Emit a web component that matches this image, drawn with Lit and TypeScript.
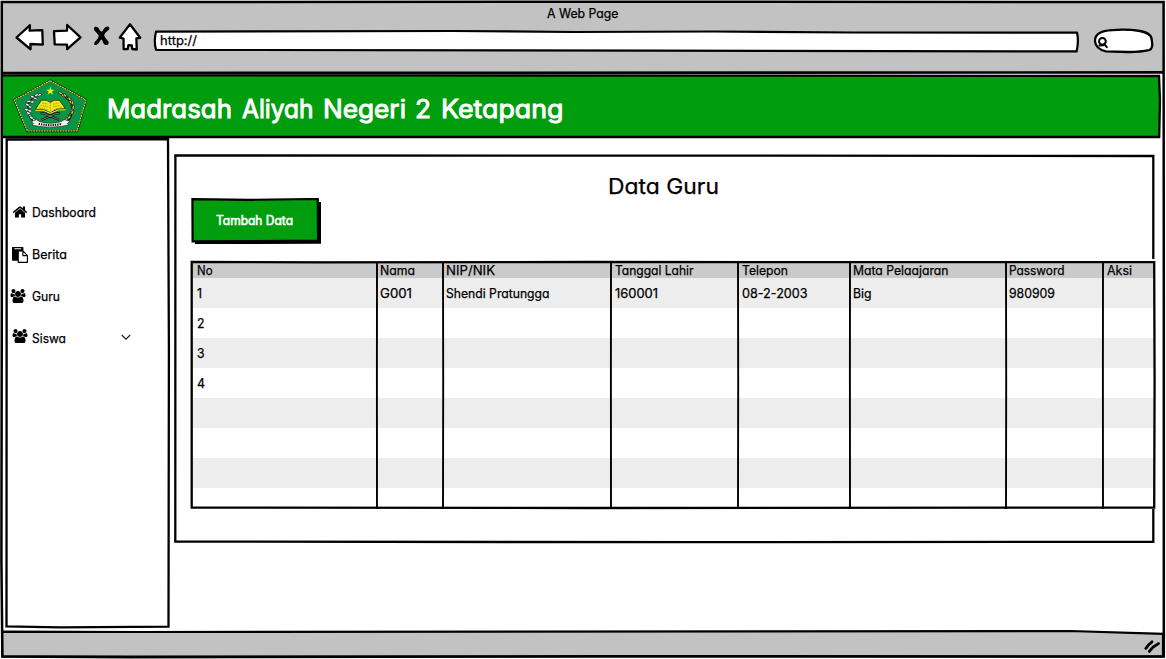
import { LitElement, html, svg, css } from "lit";
import { customElement, property } from "lit/decorators.js";

/* A run of text fitted to a given width, baseline 12px (or `base`) below its top. */
@customElement("sketch-text")
class SketchText extends LitElement {
  @property() text = "";
  @property({ type: Number }) width = 0;
  @property({ type: Number }) size = 12.5;
  @property({ type: Number }) base = 12;
  static styles = css`
    :host { display: block; flex: none; line-height: 0; }
    svg { display: block; overflow: visible; }
    text {
      font-family: Inter, "Open Sans", sans-serif;
      font-feature-settings: "cv11" 1;
      fill: currentColor;
      stroke: currentColor;
      stroke-width: var(--ink, 0.25px);
      white-space: pre;
    }
  `;
  render() {
    return html`<svg width=${this.width} height=${this.base + 4}>
      <text x="0" y=${this.base} font-size=${this.size} textLength=${this.width} lengthAdjust="spacingAndGlyphs">${this.text}</text>
    </svg>`;
  }
}

const label = (text: string, width: number, size = 12.5, base = 12) =>
  html`<sketch-text .text=${text} .width=${width} .size=${size} .base=${base}></sketch-text>`;

const HOME =
  "M1472 992v480q0 26-19 45t-45 19h-384v-384h-256v384h-384q-26 0-45-19t-19-45v-480q0-1 .5-3t.5-3l575-474 575 474q1 2 1 6zm223-69l-62 74q-8 9-21 11h-3q-13 0-21-7l-692-577-692 577q-12 8-24 7-13-2-21-11l-62-74q-8-10-7-23.5t11-21.5l719-599q32-26 76-26t76 26l244 204v-195q0-14 9-23t23-9h192q14 0 23 9t9 23v408l219 182q10 8 11 21.5t-7 23.5z";
const PASTE =
  "M768 1664h896v-640h-416q-40 0-68-28t-28-68v-416h-384v1152zm256-1440v-64q0-13-9.5-22.5t-22.5-9.5h-704q-13 0-22.5 9.5t-9.5 22.5v64q0 13 9.5 22.5t22.5 9.5h704q13 0 22.5-9.5t9.5-22.5zm256 672h299l-299-299v299zm512 128v672q0 40-28 68t-68 28h-960q-40 0-68-28t-28-68v-160h-544q-40 0-68-28t-28-68v-1344q0-40 28-68t68-28h1088q40 0 68 28t28 68v328q21 13 36 28l408 408q28 28 48 76t20 88z";
const USERS =
  "M529 896q-162 5-265 128h-134q-82 0-138-40.5t-56-118.5q0-353 124-353 6 0 43.5 21t97.5 42.5 119 21.5q67 0 133-23-5 37-5 66 0 139 81 256zm1071 637q0 120-73 189.5t-194 69.5h-874q-121 0-194-69.5t-73-189.5q0-53 3.5-103.5t14-109 26.5-108.5 43-97.5 62-81 85.5-53.5 111.5-20q10 0 43 21.5t73 48 107 48 135 21.5 135-21.5 107-48 73-48 43-21.5q61 0 111.5 20t85.5 53.5 62 81 43 97.5 26.5 108.5 14 109 3.5 103.5zm-1024-1277q0 106-75 181t-181 75-181-75-75-181 75-181 181-75 181 75 75 181zm704 384q0 159-112.5 271.5t-271.5 112.5-271.5-112.5-112.5-271.5 112.5-271.5 271.5-112.5 271.5 112.5 112.5 271.5zm576 225q0 78-56 118.5t-138 40.5h-134q-103-123-265-128 81-117 81-256 0-29-5-66 66 23 133 23 59 0 119-21.5t97.5-42.5 43.5-21q124 0 124 353zm-128-609q0 106-75 181t-181 75-181-75-75-181 75-181 181-75 181 75 75 181z";

@customElement("browser-bar")
class BrowserBar extends LitElement {
  static styles = css`
    :host { display: block; height: 73px; background: #c2c2c2; }
    .title { display: flex; padding: 6px 0 0 547px; height: 17px; }
    .tools { display: flex; align-items: flex-start; height: 34px; }
    svg { display: block; overflow: visible; flex: none; }
    .ink { fill: #fff; stroke: #000; stroke-width: 2.3; stroke-linejoin: round; stroke-linecap: round; }
    .url { position: relative; width: 926px; height: 24px; margin-top: 6px; }
    .shape { position: absolute; left: 0; top: 0; }
    .addr { position: relative; padding: 4px 0 0 7px; }
    .search { margin: 5px 0 0 13px; }
  `;
  render() {
    return html`
      <div class="title">${label("A Web Page", 71.5)}</div>
      <div class="tools">
        <svg width="153" height="34" viewBox="0 23 153 34">
          <path class="ink" d="M16.5 37.5L30 25.2L29.6 30.6L42.3 30.2L42.8 44.6L30.4 44L30.6 49.3Z" />
          <path class="ink" d="M54 31.2L67 30.6L67.2 25L80.5 37.3L67.2 49.2L67 44.6L54.7 44.4Z" />
          <path fill="#000" d="M95 26.8Q98 26.2 99.8 30.2Q101.6 33 103 29.9Q105.5 25.9 108.6 26.7Q110.4 28 108.3 30.2Q104.2 33.1 104.2 35.6Q105 38.6 108.4 41.4Q109.4 43.8 107 45Q103.7 45.7 102.6 41Q101.4 38 100 41Q97.7 45.6 94.6 45Q93.3 43.3 95.7 41Q98.9 38.4 98.7 35.6Q97.4 33.2 94.6 30.7Q93.1 28.2 95 26.8Z" />
          <path class="ink" d="M130 24.3L140.2 37.8L136.4 38.4L136.7 49.5L132.2 49L131.8 45.3L128.4 45.1L127.7 49L123.7 49.2L123.5 38.5L119.7 37.6Z" />
        </svg>
        <div class="url">
          <svg class="shape" width="926" height="24">
            <path d="M3 2.7L300 2L420 3L560 2.5L700 3.5L924 3.6Q926 12 923.6 22.4L500 21.7L3 20.8Q0.6 12 3 2.7Z" fill="#fff" stroke="#000" stroke-width="2.2" stroke-linejoin="round" />
          </svg>
          <div class="addr">${label("http://", 37)}</div>
        </div>
        <svg class="search" width="62" height="26" viewBox="1092 28 62 26">
          <path class="ink" d="M1095 41C1094.6 34 1101 30.7 1112 30.1Q1128 29 1140 31Q1151 33 1151.6 39Q1153.8 49 1149 50.2Q1140 52.2 1127 52L1106 51.3Q1095.5 49 1095 41Z" />
          <circle cx="1102.4" cy="41.3" r="3.4" fill="#fff" stroke="#000" stroke-width="2" />
          <path d="M1099.4 45.6L1103.5 45.2M1104.3 44.2L1106.8 47.2" fill="none" stroke="#000" stroke-width="2" stroke-linecap="round" />
        </svg>
      </div>`;
  }
}

/* Pentagon crest: wreaths of cotton and rice around an open book on a stand. */
const leaves = (pts: number[][], a: string, b: string) =>
  pts.map(
    ([x, y, r], i) => svg`<g transform="translate(${x} ${y}) rotate(${r})">
      <ellipse rx="6.5" ry="3.6" cx="-5" fill=${a} stroke="#111" stroke-width="1.8" />
      <ellipse rx="6" ry="3.4" cx="5" cy="2" fill=${i % 2 ? b : a} stroke="#111" stroke-width="1.8" /></g>`
  );
const crest = html`<svg width="90" height="66" viewBox="0 0 270 198">
  <path d="M136 19L244 78L217 172H66L27 78Z" fill="#079447" stroke="#111" stroke-width="5" />
  <path d="M136 20L243 78L216 171H67L28 78Z" fill="none" stroke="#e6dc30" stroke-width="3.4" stroke-dasharray="6 2" />
  <path d="M103 60Q66 78 68 107Q70 132 92 147" fill="none" stroke="#111" stroke-width="4" />
  <path d="M168 60Q204 78 203 107Q201 132 181 147" fill="none" stroke="#111" stroke-width="5" />
  ${leaves([[99, 62, -20], [87, 70, 20], [77, 82, 0], [72, 95, 30], [70, 108, 10], [74, 121, 40], [84, 134, 30]], "#fff", "#dfe6dd")}
  ${leaves([[171, 60, 30], [184, 68, 45], [196, 79, 60], [203, 92, 85], [204, 106, 100], [199, 120, 120], [189, 134, 130]], "#d8c42e", "#6b6212")}
  <path d="M136 38L139 47H148L141 53L144 62L136 56L128 62L131 53L124 47H133Z" fill="#f7ee18" />
  <path d="M109 79Q125 76 136 85Q147 76 163 79L181 104Q157 101 136 116Q114 102 91 107Z" fill="#f3e71c" stroke="#111" stroke-width="2" />
  <path d="M136 85V115M112 87L128 90M107 94L129 98M103 101L127 106M144 91L160 87M144 99L165 94M146 107L170 100" stroke="#8f8110" stroke-width="2" stroke-dasharray="5 2" />
  <path d="M91 109Q115 105 136 118Q158 104 182 107" fill="none" stroke="#f3e71c" stroke-width="3" />
  <path d="M107 117Q123 117 135 125L162 138M165 117Q149 117 137 125L110 138" fill="none" stroke="#111" stroke-width="7" />
  <path d="M108 117Q123 118 135 126L161 137M164 117Q149 118 137 126L111 137" fill="none" stroke="#eee" stroke-width="1.4" />
  <path d="M79 143L94 137L104 143Q136 153 168 143L178 137L195 142L187 148L190 153L169 157Q136 162 101 157L81 153L86 149Z" fill="#f3f3f0" stroke="#222" stroke-width="1.6" />
  <path d="M101 149Q136 158 171 149" fill="none" stroke="#111" stroke-width="6" stroke-dasharray="4 3" />
</svg>`;

@customElement("site-header")
class SiteHeader extends LitElement {
  static styles = css`
    :host { display: flex; align-items: flex-start; height: 65px; }
    .band { display: flex; width: 1157px; height: 61px; margin: 3px 0 0 3px; background: #009e0f; color: #fff; }
    .crest { margin: -2px 0 0 2px; height: 60px; }
    .crest svg { display: block; }
    .name { display: flex; gap: 9.5px; padding: 16px 0 0 12px; --ink: 0.9px; }
  `;
  render() {
    return html`<div class="band">
      <div class="crest">${crest}</div>
      <div class="name">
        ${label("Madrasah", 125, 25, 26)}${label("Aliyah", 71.5, 25, 26)}${label("Negeri", 83, 25, 26)}${label("2", 16, 25, 26)}${label("Ketapang", 122.5, 25, 26)}
      </div>
    </div>`;
  }
}

const MENU = [
  { text: "Dashboard", w: 64, icon: HOME, box: "97 250 1600 1290", iw: 14, ih: 12, dx: 0, dy: 1 },
  { text: "Berita", w: 35, icon: PASTE, box: "0 0 1792 1792", iw: 16, ih: 16, dx: -1, dy: 0 },
  { text: "Guru", w: 28, icon: USERS, box: "-64 0 1920 1792", iw: 15, ih: 14, dx: -2.5, dy: 0 },
  { text: "Siswa", w: 34, icon: USERS, box: "-64 0 1920 1792", iw: 15, ih: 14, dx: -0.5, dy: -2, open: true },
];

@customElement("side-menu")
class SideMenu extends LitElement {
  static styles = css`
    :host { display: flex; flex-direction: column; padding-top: 67px; box-sizing: border-box; width: 170px; }
    .item { display: flex; align-items: flex-start; height: 42px; padding-left: 13px; }
    .icon { width: 19px; flex: none; }
    .icon svg { display: block; overflow: visible; }
    .chev { margin: 3px 0 0 55px; }
  `;
  render() {
    return MENU.map(
      (m) => html`<div class="item">
        <div class="icon">
          <svg width=${m.iw} height=${m.ih} viewBox=${m.box} style="transform: translate(${m.dx}px, ${m.dy}px)"><path d=${m.icon} /></svg>
        </div>
        ${label(m.text, m.w)}
        ${m.open ? html`<svg class="chev" width="10" height="7"><path d="M0.7 1L5 5.2L9.2 1" fill="none" stroke="#222" stroke-width="1.2" /></svg>` : ""}
      </div>`
    );
  }
}

type Cell = [string, number];
const PADS = [6, 2.5, 2.5, 3.5, 3.5, 2.5, 2.5, 3.5];
const HEAD: Cell[] = [["No", 15.5], ["Nama", 35], ["NIP/NIK", 49], ["Tanggal Lahir", 78.5], ["Telepon", 46], ["Mata Pelaajaran", 95.5], ["Password", 55.5], ["Aksi", 25]];
const ROWS: Cell[][] = [
  [["1", 5], ["G001", 32], ["Shendi Pratungga", 103.5], ["160001", 43], ["08-2-2003", 65.5], ["Big", 18.5], ["980909", 46]],
  [["2", 7.5]],
  [["3", 7.5]],
  [["4", 8]],
  [], [], [], [],
];

@customElement("guru-table")
class GuruTable extends LitElement {
  static styles = css`
    :host { display: block; position: relative; width: 964px; height: 247px; background: #fff; }
    .row { display: grid; grid-template-columns: 186px 66px 168px 127px 112px 156px 97px 51px; width: 963px; height: 30px; padding-top: 8px; box-sizing: border-box; }
    .row:nth-child(even) { background: #ededed; }
    .row.head { height: 17px; padding-top: 2px; background: #cacaca; }
    .row.last { height: 19px; }
    .lines { position: absolute; inset: 0; overflow: visible; }
  `;
  cells(list: Cell[]) {
    return list.map(([t, w], i) => html`<div style="padding-left: ${PADS[i]}px">${label(t, w)}</div>`);
  }
  render() {
    const xs = [186, 252, 420, 547, 659, 815, 912];
    return html`
      <div class="row head">${this.cells(HEAD)}</div>
      ${ROWS.map((r, i) => html`<div class="row ${i === 7 ? "last" : ""}">${this.cells(r)}</div>`)}
      <svg class="lines" width="964" height="247" fill="none" stroke="#000">
        <path stroke-width="2.3" d="M0.7 0.8L130 1.3L400 1L963.2 1.2L963.6 120L963.2 246.6L400 247L0.7 246.6Z" />
        ${xs.map((x, i) => svg`<path stroke-width="1.9" d="M${x} 1L${x + (i % 2 ? 0.2 : -0.1)} 120L${x} 248" />`)}
      </svg>`;
  }
}

@customElement("app-root")
class AppRoot extends LitElement {
  static styles = css`
    :host {
      display: block; position: relative; width: 1166px; height: 659px; overflow: hidden;
      background: #fff; color: #000; font-family: Inter, "Open Sans", sans-serif;
    }
    browser-bar { margin: 0 2px 0 0; }
    .body { display: flex; height: 493px; }
    .card { width: 978px; height: 387px; margin: 17px 0 0 5px; box-sizing: border-box; padding-left: 16px; }
    .heading { padding: 17px 0 0 417px; height: 43px; box-sizing: border-box; }
    .btn {
      position: relative; display: flex; width: 130px; height: 46px; box-sizing: border-box;
      padding: 15px 0 0 25px; color: #fff; --ink: 0.6px;
    }
    .face { position: absolute; left: 0; top: 0; }
    .btn sketch-text { position: relative; }
    guru-table { margin-top: 17px; }
    .status { height: 28px; margin-left: 2px; width: 1161px; }
    .frame { position: absolute; left: 0; top: 0; pointer-events: none; }
    .status svg { display: block; overflow: visible; }
  `;
  render() {
    return html`
      <browser-bar></browser-bar>
      <site-header></site-header>
      <div class="body">
        <side-menu></side-menu>
        <div class="card">
          <div class="heading">${label("Data Guru", 111, 22, 22)}</div>
          <div class="btn">
            <svg class="face" width="130" height="46">
              <path d="M4 4H130V45.8L4 46Z" />
              <path d="M1.4 1.2L60 1.8L126.8 1L127 42.6L1.6 43.4Z" fill="#009e0f" stroke="#000" stroke-width="2.2" />
            </svg>
            ${label("Tambah Data", 77)}
          </div>
          <guru-table></guru-table>
        </div>
      </div>
      <div class="status">
        <svg width="1161" height="28" viewBox="2 631 1161 28">
          <path d="M2 631.7L140 632L1070 631L1163 633.8V656.5H2Z" fill="#c2c2c2" stroke="#000" stroke-width="2.2" />
          <path d="M1145.8 648.4Q1148 644.8 1152 641.8M1149.3 651.4Q1153.6 646 1158.6 643.6" stroke="#000" stroke-width="2.8" stroke-linecap="round" fill="none" />
        </svg>
      </div>
      <svg class="frame" width="1166" height="659" fill="none" stroke="#000" stroke-width="2.3">
        <path stroke="#fff" stroke-width="3" d="M0 0H1166" />
        <path stroke="#fff" stroke-width="2" d="M0.2 0V659" />
        <path stroke-width="2.5" d="M1.8 2.1L600 1.8L1163.6 2L1163.8 300L1163.8 656.5L600 656.2L130 657.2L2.4 656.6L1.4 560L1.8 300Z" />
        <path stroke-width="2.6" d="M2 73L1163 72.4" />
        <path d="M2.5 75.3L400 75.4L1159 76L1160 100L1159.2 137L600 137L2.5 137" />
        <path d="M6.7 139.5L168 139L168.9 350L168.5 626.7L60 627.4L6.5 626.3Z" />
        <path d="M1153.3 259V156L700 155.6L175.4 155.5L175.3 541.6L700 542.2L1153.3 541.8V509" />
      </svg>`;
  }
}
